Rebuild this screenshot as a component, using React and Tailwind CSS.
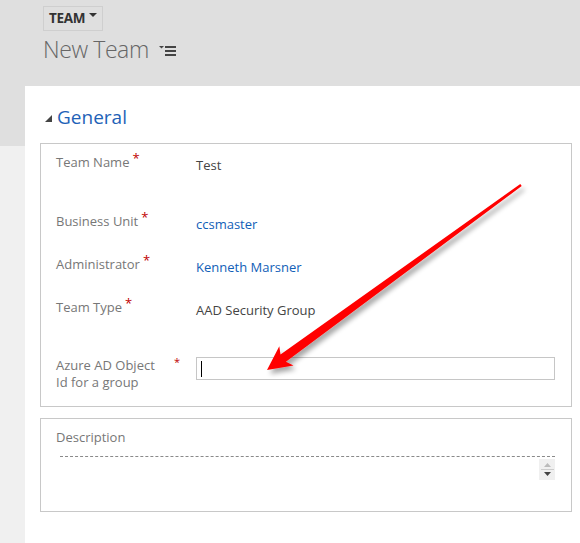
import React from "react";

const font = { fontFamily: '"Open Sans", "Noto Sans", sans-serif' };

const Req = () => <span className="text-[#c00000] text-[13px] ml-[3px] relative -top-[4px]">*</span>;

const Row = ({ label, value, valueClass = "text-[#444]", h }) => (
  <div className={`flex ${h}`}>
    <div className="w-[140px] text-[13px] leading-[20px] text-[#777]">
      {label}
      <Req />
    </div>
    <div className={`pt-[3px] text-[13px] leading-[20px] ${valueClass}`}>{value}</div>
  </div>
);

const Arrow = () => (
  <svg className="absolute inset-0 pointer-events-none" width="580" height="543" viewBox="0 0 580 543">
    <defs>
      <filter id="sh" x="-20%" y="-20%" width="140%" height="140%">
        <feGaussianBlur in="SourceAlpha" stdDeviation="2.5" />
        <feOffset dx="3" dy="4" result="b" />
        <feComponentTransfer>
          <feFuncA type="linear" slope="0.35" />
        </feComponentTransfer>
        <feMerge>
          <feMergeNode />
          <feMergeNode in="SourceGraphic" />
        </feMerge>
      </filter>
    </defs>
    <polygon
      filter="url(#sh)"
      fill="#ff0000"
      points="520.3,184 280.5,354.6 279.3,346.2 267,370 293.5,365.6 285.9,361.8 521.7,186"
    />
  </svg>
);

export default function App() {
  return (
    <div className="relative w-[580px] h-[543px] overflow-hidden bg-[#f0f0f0]" style={font}>
      {/* header */}
      <div className="h-[86px] bg-[#dfdfdf] pl-[43px] pt-[5px]">
        <div className="inline-flex items-center h-[25px] px-[5px] border border-[#cfcfcf] text-[13.5px] font-bold text-[#333] tracking-tight">
          TEAM
          <svg width="8" height="5" viewBox="0 0 8 5" className="ml-[4px] -mt-[6px]">
            <polygon points="0,0 8,0 4,4" fill="#333" />
          </svg>
        </div>
        <div className="flex items-center mt-[1px]">
          <span className="text-[23px] leading-[34px] font-light text-[#666] tracking-[-0.4px]">New Team</span>
          <svg width="18" height="12" viewBox="0 0 18 12" className="ml-[10px] mt-[4px]">
            <polygon points="0,1 5,1 2.5,3.5" fill="#444" />
            <rect x="6" y="1" width="11" height="2" fill="#444" />
            <rect x="6" y="5" width="11" height="2" fill="#444" />
            <rect x="6" y="9" width="11" height="2" fill="#444" />
          </svg>
        </div>
      </div>
      <div className="flex">
        <div className="w-[25px] h-[60px] bg-[#dfdfdf] shrink-0" />
        <div className="flex-1 h-[457px] bg-white pl-[15px] pr-[8px]">
          {/* General */}
          <div className="flex items-center h-[57px] pl-[5px] pt-[5px]">
            <svg width="7" height="7" viewBox="0 0 7 7" className="mt-[2px]">
              <polygon points="7,0 7,7 0,7" fill="#444" />
            </svg>
            <span className="ml-[5px] text-[19px] text-[#1e62b7]">General</span>
          </div>
          <div className="border border-[#c8c8c8] h-[264px] pl-[15px] pt-[8px] pr-[16px]">
            <Row label="Team Name" value="Test" h="h-[59px]" />
            <Row label="Business Unit" value="ccsmaster" valueClass="text-[#1160b7]" h="h-[43px]" />
            <Row label="Administrator" value="Kenneth Marsner" valueClass="text-[#1160b7]" h="h-[43px]" />
            <Row label="Team Type" value="AAD Security Group" h="h-[59px]" />
            <div className="flex">
              <div className="w-[118px] pt-[1px] text-[13px] leading-[17px] text-[#777]">
                Azure AD Object
                <br />
                Id for a group
              </div>
              <div className="w-[22px] text-[#c00000] text-[11px] leading-[12px]">*</div>
              <div className="flex-1 h-[23px] border border-[#c6c6c6] mt-[1px] flex items-center pl-[4px]">
                <div className="w-[1px] h-[16px] bg-black" />
              </div>
            </div>
          </div>
          {/* Description */}
          <div className="mt-[11px] border border-[#c8c8c8] h-[94px] pl-[15px] pr-[16px] pt-[8px]">
            <div className="text-[13px] leading-[20px] text-[#777]">Description</div>
            <div className="mt-[9px] ml-[4px] border-t border-dashed border-[#8a8a8a]" />
            <div className="flex justify-end">
              <div className="w-[16px] h-[21px] bg-[#f0f0f0] flex flex-col items-center justify-center gap-[2px] mt-[2px]">
                <svg width="7" height="4" viewBox="0 0 7 4"><polygon points="0,4 7,4 3.5,0" fill="#bbb" /></svg>
                <div className="w-[13px] h-px bg-[#ccc]" />
                <svg width="7" height="4" viewBox="0 0 7 4"><polygon points="0,0 7,0 3.5,4" fill="#444" /></svg>
              </div>
            </div>
          </div>
        </div>
      </div>
      <Arrow />
    </div>
  );
}
